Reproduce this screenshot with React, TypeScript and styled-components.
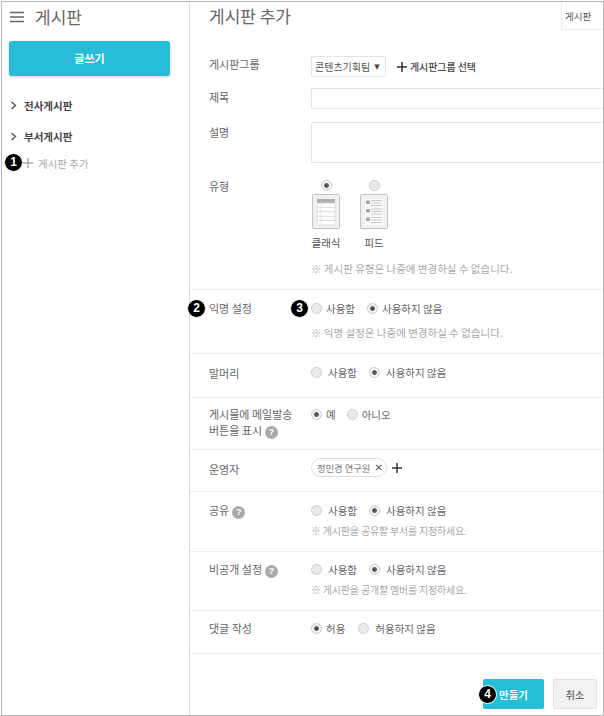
import React from "react";
import styled, { createGlobalStyle } from "styled-components";

const Global = createGlobalStyle`
  html, body { margin: 0; padding: 0; background: #fff; }
  body { font-family: "Noto Sans CJK KR", "Noto Sans", sans-serif; color: #666; font-size: 11px; }
  * { box-sizing: border-box; }
`;

const Frame = styled.div`
  width: 603px; height: 715px; margin: 1px 0 0 1px; display: flex; overflow: hidden;
  border: 1px solid #b9b9b9; background: #fff;
`;
const Sidebar = styled.aside`
  width: 188px; flex: none; border-right: 1px solid #ddd; display: flex; flex-direction: column;
  padding: 0 7px;
`;
const Brand = styled.div`
  display: flex; align-items: center; gap: 11px; height: 29px; padding-left: 1px;
  font-size: 17px; color: #666; line-height: 28px;
`;
const Burger = styled.svg`width: 14px; height: 12px; flex: none; display: block;`;
const WriteBtn = styled.button`
  margin-top: 10px; width: 161px; height: 35px; padding: 0 0 2px; border: 0; border-radius: 3px; background: #25bdd8;
  color: #fff; font: 700 11px "Noto Sans CJK KR", sans-serif; box-shadow: 0 1px 3px rgba(0,0,0,.2);
`;
const TreeList = styled.div`margin-top: 23px; display: flex; flex-direction: column; gap: 19px;`;
const Tree = styled.div`
  display: flex; align-items: center; height: 12px; gap: 6px;
  font-size: 10.5px; font-weight: 700; color: #444;
`;
const Chevron = styled.svg`width: 9px; height: 9px; flex: none;`;
const AddRow = styled.div`
  position: relative; display: flex; align-items: center; gap: 5px; height: 14px; margin-top: 14px;
  padding-left: 14px; color: #aaa; font-size: 10.5px;
`;
const Badge = styled.span<{ $x: number; $y: number }>`
  position: absolute; left: ${p => p.$x}px; top: ${p => p.$y}px; width: 19px; height: 19px; border-radius: 50%;
  background: #000; color: #fff; border: 1px solid #fff; font: 700 12px/17px "Liberation Sans", sans-serif;
  text-align: center; z-index: 2;
`;
const Main = styled.main`flex: 1; min-width: 0; display: flex; flex-direction: column; position: relative;`;
const TitleBar = styled.div`
  height: 28px; padding-left: 19px; display: flex; justify-content: space-between; align-items: flex-start;
`;
const PageTitle = styled.h1`
  margin: 0; font-size: 17px; font-weight: 400; line-height: 27px; color: #666;
`;
const Tab = styled.div`
  width: 42px; height: 28px; border-left: 1px solid #eee; border-bottom: 1px solid #eee;
  font-size: 9.5px; line-height: 28px; padding-left: 3px; color: #555;
`;
const Upper = styled.section`
  padding: 26px 0 0 19px; height: 260px; border-bottom: 1px solid #eee;
  display: grid; grid-template-columns: 102px 1fr; grid-auto-rows: min-content;
`;
const Label = styled.div<{ $mt?: number }>`
  font-size: 11px; line-height: 16px; color: #666; margin-top: ${p => p.$mt ?? 0}px;
`;
const GroupLine = styled.div`display: flex; align-items: center; gap: 11px; height: 21px; margin-bottom: 11px;`;
const SelectBox = styled.div`
  width: 75px; height: 21px; border: 1px solid #e4e4e4; border-radius: 2px; padding-left: 3px;
  display: flex; align-items: center; gap: 4px; font-size: 10px; color: #555; white-space: nowrap;
`;
const SelectArrow = styled.span`font: 7px "DejaVu Sans", sans-serif; color: #444;`;
const GroupPick = styled.div`display: flex; align-items: center; gap: 3px; font-size: 10px; font-weight: 500; color: #444; letter-spacing: -0.1px;`;
const Plus = styled.svg`width: 10px; height: 10px; flex: none;`;
const TextInput = styled.div<{ $h: number; $mb: number }>`
  height: ${p => p.$h}px; margin-bottom: ${p => p.$mb}px; border: 1px solid #e4e4e4; border-right: 0; border-radius: 2px 0 0 2px;
`;
const TypeCol = styled.div`display: flex; gap: 20px; margin-top: 2px; padding-left: 1px;`;
const TypeItem = styled.div`display: flex; flex-direction: column; align-items: center; width: 28px;`;
const Doc = styled.svg`width: 28px; height: 35px; margin-top: 3px; display: block;`;
const TypeName = styled.div`margin-top: 7px; font-size: 10.5px; line-height: 14px; color: #555; white-space: nowrap;`;
const RadioDot = styled.span<{ $on?: boolean }>`
  width: 11px; height: 11px; flex: none; border-radius: 50%; border: 1px solid #ccc;
  background: ${p => (p.$on ? "radial-gradient(circle, #555 0 2px, #f2f2f2 2.6px)" : "#eaeaea")};
  display: block;
`;
const Note = styled.div<{ $small?: boolean }>`
  font-size: ${p => (p.$small ? 10 : 10.5)}px; line-height: 14px; color: #aaa;
  letter-spacing: ${p => (p.$small ? -0.2 : 0)}px; white-space: nowrap;
`;
const TypeNote = styled(Note)`margin-top: 12px;`;
const Row = styled.section<{ $h: number; $pt?: number }>`
  position: relative; height: ${p => p.$h}px; padding: ${p => p.$pt ?? 10}px 0 0 19px; border-bottom: 1px solid #eee;
  display: grid; grid-template-columns: 102px 1fr; align-content: start;
`;
const RowBody = styled.div<{ $gap?: number }>`display: flex; flex-direction: column; gap: ${p => p.$gap ?? 6}px;`;
const RadioLine = styled.div<{ $gap?: number }>`
  display: flex; align-items: center; gap: ${p => p.$gap ?? 12}px; height: 16px;
`;
const RadioOpt = styled.label<{ $gap?: number }>`
  display: flex; align-items: center; gap: ${p => p.$gap ?? 6}px; font-size: 10.5px; color: #666; white-space: nowrap;
`;
const Help = styled.span`
  display: inline-block; width: 13px; height: 13px; border-radius: 50%; background: #aaa; color: #fff;
  font: 700 9px/13px "Liberation Sans", sans-serif; text-align: center; margin-left: 3px; vertical-align: 0;
`;
const ChipLine = styled.div`display: flex; align-items: center; gap: 5px; margin-top: -3px;`;
const Chip = styled.div`
  height: 19px; width: 76px; border: 1px solid #ddd; border-radius: 10px; display: flex; align-items: center;
  padding-left: 5px; gap: 4px; font-size: 9.3px; color: #777; white-space: nowrap;
`;
const ChipX = styled.span`font: 700 10px "Liberation Sans", "DejaVu Sans", sans-serif; color: #555;`;
const Footer = styled.div`
  flex: 1; position: relative; display: flex; justify-content: flex-end; align-items: flex-start;
  gap: 9px; padding: 25px 6px 0 0;
`;
const PrimaryBtn = styled.button`
  width: 61px; height: 30px; border: 0; border-radius: 2px; background: #25bdd8; color: #fff;
  font: 700 10.5px "Noto Sans CJK KR", sans-serif;
`;
const CancelBtn = styled.button`
  width: 44px; height: 30px; border: 1px solid #e2e2e2; border-radius: 2px; background: #f2f2f2; color: #666;
  font: 500 10px "Noto Sans CJK KR", sans-serif;
`;

const PlusIcon = ({ c = "#333" }: { c?: string }) => (
  <Plus viewBox="0 0 10 10"><path d="M5 0v10M0 5h10" stroke={c} strokeWidth="1.5" /></Plus>
);
const Arrow = () => (
  <Chevron viewBox="0 0 9 9"><path d="M2.5 1l4 3.5-4 3.5" fill="none" stroke="#555" strokeWidth="1.4" /></Chevron>
);
const Radio = ({ on, children, gap }: { on?: boolean; children: React.ReactNode; gap?: number }) => (
  <RadioOpt $gap={gap}><RadioDot $on={on} />{children}</RadioOpt>
);

const Classic = () => (
  <Doc viewBox="0 0 28 35">
    <rect x=".5" y=".5" width="27" height="34" rx="1" fill="#f1f1f1" stroke="#c4c4c4" />
    <rect x="5" y="5" width="18" height="4" fill="#b0b0b0" />
    {[9, 13.4, 17.8, 22.2, 26.6].map(y => <rect key={y} x="5" y={y} width="18" height="4.4" fill="#fdfdfd" stroke="#d0d0d0" strokeWidth=".5" />)}
    <path d="M9 5v26" stroke="#d0d0d0" strokeWidth=".5" />
  </Doc>
);
const Feed = () => (
  <Doc viewBox="0 0 28 35">
    <rect x=".5" y=".5" width="27" height="34" rx="1" fill="#f1f1f1" stroke="#c4c4c4" />
    <rect x="5" y="5" width="18" height="26" fill="#fbfbfb" />
    {[6.5, 15, 23.5].map(y => (
      <g key={y}>
        <rect x="6" y={y} width="4" height="3.5" fill="#aaa" />
        <path d={`M11 ${y}h11M11 ${y + 2.5}h11M11 ${y + 5}h11`} stroke="#bbb" strokeWidth=".8" />
      </g>
    ))}
  </Doc>
);

export default function App() {
  return (
    <Frame>
      <Global />
      <Sidebar>
        <Brand>
          <Burger viewBox="0 0 14 12"><path d="M0 1.5h14M0 6h14M0 10.5h14" stroke="#666" strokeWidth="1.5" /></Burger>
          게시판
        </Brand>
        <WriteBtn>글쓰기</WriteBtn>
        <TreeList>
          <Tree><Arrow />전사게시판</Tree>
          <Tree><Arrow />부서게시판</Tree>
        </TreeList>
        <AddRow>
          <Badge $x={-5} $y={-3}>1</Badge>
          <PlusIcon c="#aaa" />게시판 추가
        </AddRow>
      </Sidebar>
      <Main>
        <TitleBar>
          <PageTitle>게시판 추가</PageTitle>
          <Tab>게시판</Tab>
        </TitleBar>
        <Upper>
          <Label>게시판그룹</Label>
          <GroupLine>
            <SelectBox>콘텐츠기획팀<SelectArrow>▼</SelectArrow></SelectBox>
            <GroupPick><PlusIcon />게시판그룹 선택</GroupPick>
          </GroupLine>
          <Label $mt={1}>제목</Label>
          <TextInput $h={21} $mb={13} />
          <Label $mt={2}>설명</Label>
          <TextInput $h={41} $mb={15} />
          <Label>유형</Label>
          <div>
            <TypeCol>
              <TypeItem><RadioDot $on /><Classic /><TypeName>클래식</TypeName></TypeItem>
              <TypeItem><RadioDot /><Feed /><TypeName>피드</TypeName></TypeItem>
            </TypeCol>
            <TypeNote>※ 게시판 유형은 나중에 변경하실 수 없습니다.</TypeNote>
          </div>
        </Upper>
        <Row $h={64}>
          <Badge $x={-3} $y={9}>2</Badge>
          <Badge $x={100} $y={9}>3</Badge>
          <Label>익명 설정</Label>
          <RowBody $gap={10}>
            <RadioLine><Radio gap={4}>사용함</Radio><Radio on gap={4}>사용하지 않음</Radio></RadioLine>
            <Note>※ 익명 설정은 나중에 변경하실 수 없습니다.</Note>
          </RowBody>
        </Row>
        <Row $h={44}>
          <Label $mt={1}>말머리</Label>
          <RadioLine><Radio>사용함</Radio><Radio on>사용하지 않음</Radio></RadioLine>
        </Row>
        <Row $h={52} $pt={8}>
          <Label>게시물에 메일발송<br />버튼을 표시<Help>?</Help></Label>
          <RadioLine $gap={11}><Radio on gap={4}>예</Radio><Radio gap={4}>아니오</Radio></RadioLine>
        </Row>
        <Row $h={42} $pt={11}>
          <Label>운영자</Label>
          <ChipLine><Chip>정민경 연구원<ChipX>✕</ChipX></Chip><PlusIcon /></ChipLine>
        </Row>
        <Row $h={60}>
          <Label>공유<Help>?</Help></Label>
          <RowBody>
            <RadioLine><Radio>사용함</Radio><Radio on>사용하지 않음</Radio></RadioLine>
            <Note $small>※ 게시판을 공유할 부서를 지정하세요.</Note>
          </RowBody>
        </Row>
        <Row $h={59} $pt={9}>
          <Label>비공개 설정<Help>?</Help></Label>
          <RowBody>
            <RadioLine><Radio>사용함</Radio><Radio on>사용하지 않음</Radio></RadioLine>
            <Note $small>※ 게시판을 공개할 멤버를 지정하세요.</Note>
          </RowBody>
        </Row>
        <Row $h={43} $pt={9}>
          <Label>댓글 작성</Label>
          <RadioLine $gap={13}><Radio on gap={4}>허용</Radio><Radio>허용하지 않음</Radio></RadioLine>
        </Row>
        <Footer>
          <Badge $x={288} $y={31}>4</Badge>
          <PrimaryBtn>만들기</PrimaryBtn>
          <CancelBtn>취소</CancelBtn>
        </Footer>
      </Main>
    </Frame>
  );
}
